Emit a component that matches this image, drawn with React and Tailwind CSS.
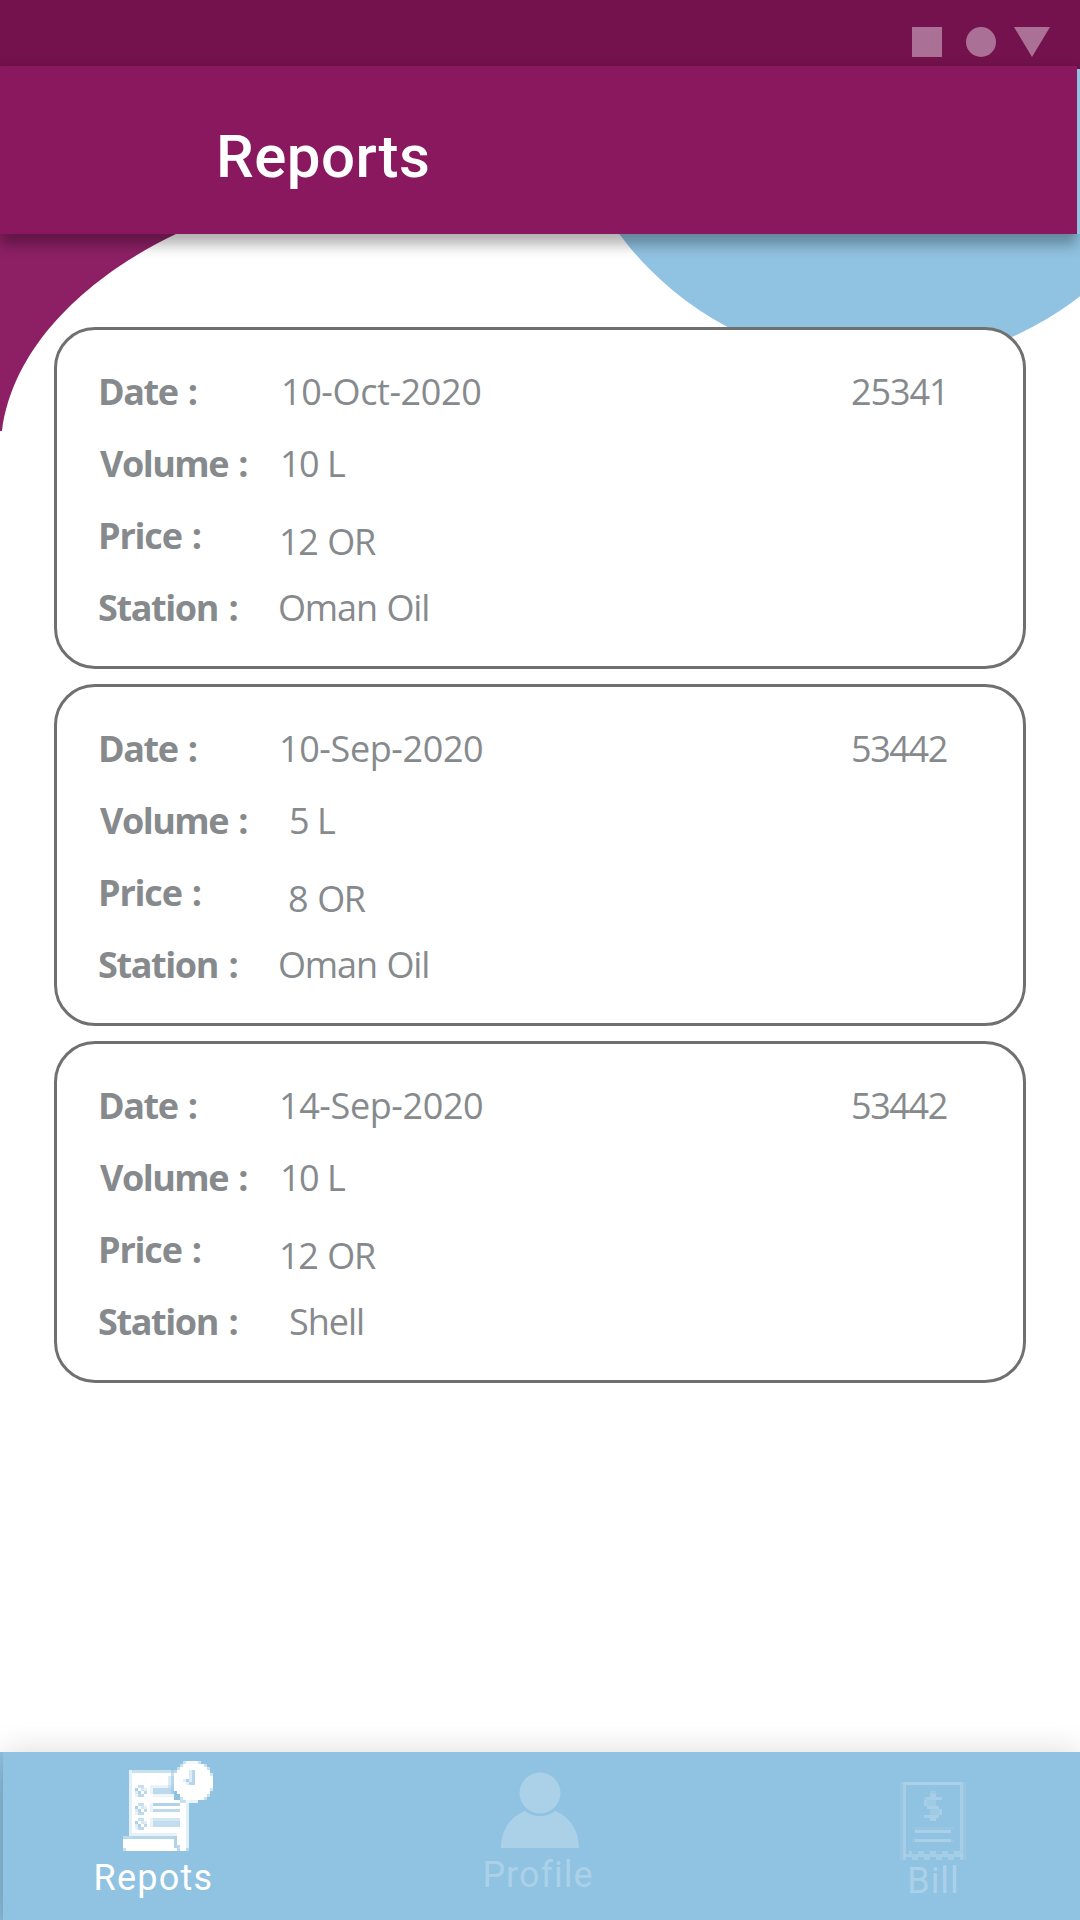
const reports = [
  {
    id: { text: "25341", className: "tracking-[-1.1px]" },
    rows: [
      { text: "10-Oct-2020", className: "ml-[2px] tracking-[-0.4px]" },
      { text: "10 L", className: "ml-px tracking-[-1.5px] [word-spacing:1px]" },
      { text: "12 OR", className: "pt-3 tracking-[-1.4px] [word-spacing:2px]" },
      { text: "Oman Oil", className: "-ml-px tracking-[-1.15px] [word-spacing:1.5px]" },
    ],
  },
  {
    id: { text: "53442", className: "tracking-[-1.4px]" },
    rows: [
      { text: "10-Sep-2020", className: "tracking-[-0.4px]" },
      { text: "5 L", className: "ml-[10px] tracking-[-1.5px] [word-spacing:1px]" },
      { text: "8 OR", className: "ml-[9px] pt-3 tracking-[-1.4px] [word-spacing:2px]" },
      { text: "Oman Oil", className: "-ml-px tracking-[-1.15px] [word-spacing:1.5px]" },
    ],
  },
  {
    id: { text: "53442", className: "tracking-[-1.4px]" },
    rows: [
      { text: "14-Sep-2020", className: "tracking-[-0.4px]" },
      { text: "10 L", className: "ml-px tracking-[-1.5px] [word-spacing:1px]" },
      { text: "12 OR", className: "pt-3 tracking-[-1.4px] [word-spacing:2px]" },
      { text: "Shell", className: "ml-[10px] tracking-[-1px]" },
    ],
  },
];

const labels = [
  { text: "Date :", className: "w-[181px] tracking-[-1.4px] [word-spacing:2px]" },
  { text: "Volume :", className: "w-[181px] pl-[2px] tracking-[-1.5px] [word-spacing:2.5px]" },
  { text: "Price :", className: "w-[181px] tracking-[-1.2px] [word-spacing:2px]" },
  { text: "Station :", className: "w-[181px] tracking-[-1.4px] [word-spacing:2.5px]" },
];

function StatusBar() {
  return (
    <div className="flex h-[69px] items-start justify-end bg-[#74124d] pt-[27px] pr-[30px]">
      <svg width="138" height="30" viewBox="0 0 138 30" fill="#ab7095">
        <rect width="30" height="30" />
        <circle cx="69" cy="15" r="15" />
        <path d="M102 0H138L120 30Z" />
      </svg>
    </div>
  );
}

function AppBar() {
  return (
    <header className="relative -mt-[3px] flex h-[168px]">
      <div className="flex flex-1 items-center bg-[#89185e] pt-[13px] pl-[216px] shadow-[0_12px_12px_rgba(0,0,0,0.26),0_0_12px_rgba(0,0,0,0.12)]">
        <h1 className="font-['Roboto',sans-serif] text-[60px] leading-[70px] font-medium tracking-[0.45px] text-white">
          Reports
        </h1>
      </div>
      <div className="relative mt-[3px] w-[3px] bg-[#8fc1e0]" />
    </header>
  );
}

function Backdrop() {
  return (
    <svg className="absolute top-0 left-0" width="1080" height="440" viewBox="0 0 1080 440">
      <path d="M0 200H176V234C110 265 15 332 2 431H0Z" fill="#8d2065" />
      <circle cx="880" cy="40" r="325" fill="#90c2e1" />
    </svg>
  );
}

function ReportCard({ report }) {
  return (
    <section className="h-[342px] rounded-[41px] border-[3px] border-[#707070] bg-white pt-[25px] pl-[41px]">
      {labels.map((label, i) => (
        <div key={label.text} className="flex h-[72px] items-center">
          <div className="shrink-0">
            <div className={"font-bold " + label.className}>{label.text}</div>
          </div>
          <div className="flex-1">
            <div className={report.rows[i].className}>{report.rows[i].text}</div>
          </div>
          {i === 0 && (
            <div className="w-[172px]">
              <span className={report.id.className}>{report.id.text}</span>
            </div>
          )}
        </div>
      ))}
    </section>
  );
}

// Clock face as horizontal runs: [x, y, width, opacity]
const clockRuns = [
  [20, 0, 6, 0.55],
  [21, 0, 4, 0.8],
  [19, 1, 9, 0.5],
  [20, 1, 7, 1],
  [18, 2, 11, 0.5],
  [19, 2, 9, 1],
  [17, 3, 12, 0.4],
  [18, 3, 11, 1],
  [29, 4, 1, 0.6],
];

function Tick({ y }) {
  return (
    <g fill="#8fc1e0">
      <rect x="5" y={y} width="2" height="1" opacity="0.5" />
      <rect x="4" y={y + 1} width="1" height="1" opacity="0.75" />
      <rect x="6" y={y + 1} width="1" height="1" opacity="0.4" />
      <rect x="7" y={y + 1} width="1" height="1" opacity="0.25" />
      <rect x="4" y={y + 2} width="1" height="1" opacity="0.3" />
      <rect x="5" y={y + 2} width="1" height="1" opacity="0.7" />
      <rect x="7" y={y + 2} width="1" height="1" opacity="0.6" />
      <rect x="5" y={y + 3} width="2" height="1" opacity="0.6" />
      <rect x="4" y={y + 3} width="1" height="1" opacity="0.2" />
    </g>
  );
}

function ReportsIcon() {
  return (
    <svg className="ml-[28px]" width="90" height="90" viewBox="0 0 30 30" shapeRendering="crispEdges">
      <g fill="#fff">
        <rect x="3" y="3" width="14" height="1" opacity="0.5" />
        <rect x="2" y="3" width="1" height="22" opacity="0.75" />
        <rect x="3" y="4" width="14" height="26" />
        <rect x="17" y="13" width="4" height="17" />
        <rect x="21" y="13" width="1" height="17" opacity="0.75" />
        <rect x="0" y="26" width="4" height="4" />
      </g>
      <g fill="#8fc1e0">
        <rect x="15" y="5" width="2" height="4" opacity="0.3" />
        <rect x="9" y="8" width="1" height="3" opacity="0.2" />
        <rect x="10" y="8" width="7" height="1" opacity="0.2" />
        <rect x="10" y="9" width="7" height="2" opacity="0.6" />
        <rect x="10" y="11" width="8" height="1" opacity="0.15" />
        <rect x="10" y="14" width="9" height="1" opacity="0.7" />
        <rect x="10" y="16" width="9" height="1" opacity="0.6" />
        <rect x="9" y="14" width="1" height="3" opacity="0.2" />
        <rect x="9" y="19" width="1" height="3" opacity="0.2" />
        <rect x="10" y="19" width="9" height="1" opacity="0.4" />
        <rect x="10" y="20" width="9" height="2" opacity="0.55" />
        <rect x="3" y="24" width="15" height="1" opacity="0.22" />
        <rect x="3" y="25" width="14" height="1" opacity="0.65" />
        <rect x="17" y="25" width="1" height="4" opacity="0.7" />
        <rect x="18" y="28" width="1" height="2" opacity="0.6" />
        <rect x="0" y="29" width="1" height="1" opacity="0.5" />
        <rect x="21" y="29" width="1" height="1" opacity="0.5" />
      </g>
      <rect x="0" y="25" width="3" height="1" fill="#fff" opacity="0.4" />
      <Tick y={8} />
      <Tick y={14} />
      <Tick y={19} />
      <path d="M17 3H16V11H17V12H18V13H19V14H22V13H17Z" fill="#8fc1e0" opacity="0.5" />
      <g fill="#fff">
        {clockRuns.map(([x, y, w, o], i) => (
          <rect key={i} x={x} y={y} width={w} height="1" opacity={o} />
        ))}
        <rect x="17" y="4" width="12" height="6" />
        <rect x="29" y="5" width="1" height="4" />
        <rect x="29" y="9" width="1" height="1" opacity="0.6" />
        <rect x="18" y="10" width="11" height="1" />
        <rect x="19" y="11" width="9" height="1" />
        <rect x="28" y="11" width="1" height="1" opacity="0.5" />
        <rect x="20" y="12" width="7" height="1" />
        <rect x="19" y="12" width="1" height="1" opacity="0.5" />
        <rect x="27" y="12" width="1" height="1" opacity="0.5" />
        <rect x="21" y="13" width="4" height="1" opacity="0.8" />
      </g>
      <g fill="#8fc1e0">
        <rect x="23" y="3" width="1" height="5" opacity="0.65" />
        <rect x="22" y="3" width="1" height="4" opacity="0.3" />
        <rect x="21" y="6" width="1" height="1" opacity="0.7" />
        <rect x="20" y="6" width="1" height="1" opacity="0.25" />
        <rect x="22" y="7" width="1" height="1" opacity="0.65" />
        <rect x="21" y="7" width="1" height="1" opacity="0.25" />
      </g>
    </svg>
  );
}

function ProfileIcon() {
  return (
    <svg className="ml-[3px]" width="78" height="76" viewBox="0 0 78 76">
      <path d="M0 76C0 58 10 44 24 39A24.5 24.5 0 0 0 54 39C68 44 78 58 78 76Z" fill="#abd1e9" />
      <circle cx="39" cy="21" r="20.5" fill="#abd1e9" />
    </svg>
  );
}

function BillIcon() {
  return (
    <svg width="66" height="78" viewBox="0 0 22 26" fill="#abd1e9" shapeRendering="crispEdges">
      <rect x="1" y="0" width="20" height="1" />
      <rect x="1" y="1" width="1" height="24" opacity="0.8" />
      <rect x="0" y="0" width="1" height="26" opacity="0.3" />
      <rect x="20" y="1" width="1" height="24" opacity="0.8" />
      <rect x="21" y="0" width="1" height="26" opacity="0.3" />
      <path d="M10 4H12V5H14V6H9V5H10ZM8 6H9V8H8ZM9 8H13V9H9ZM13 9H14V11H13ZM8 11H13V12H12V13H10V12H8Z" opacity="0.85" />
      <path d="M10 3H12V4H10ZM8 5H9V6H8ZM9 6H12V8H9ZM10 9H13V11H10Z" opacity="0.5" />
      <rect x="5" y="16" width="12" height="1" />
      <rect x="4" y="15" width="14" height="1" opacity="0.25" />
      <rect x="5" y="19" width="12" height="1" />
      <rect x="4" y="19" width="14" height="1" opacity="0.25" />
      <path d="M1 24H3V23H4V24H6V23H8V24H10V23H12V24H14V23H16V24H18V23H20V24H21V26H20V25H18V26H16V25H14V26H12V25H10V26H8V25H6V26H4V25H2V26H1Z" opacity="0.75" />
    </svg>
  );
}

function BottomNav() {
  return (
    <div className="h-[168px] bg-[#8fc1e0] pl-[3px]">
      <nav className="flex h-full bg-[#90c2e1] font-['Roboto',sans-serif] text-[36px] leading-[42px] text-[#abd1e9] shadow-[0_24px_24px_rgba(0,0,0,0.12),0_0_30px_rgba(0,0,0,0.15)]">
        <div className="flex w-[301px] flex-col items-center pt-[9px] text-white">
          <ReportsIcon />
          <span className="mt-[6px] tracking-[1.25px]">Repots</span>
        </div>
        <div className="flex w-[468px] flex-col items-center pt-[20px]">
          <ProfileIcon />
          <span className="mt-[6px] tracking-[1px]">Profile</span>
        </div>
        <div className="flex w-[308px] flex-col items-center pt-[30px] pl-[14px]">
          <BillIcon />
          <span className="ml-px tracking-[0.9px]">Bill</span>
        </div>
      </nav>
    </div>
  );
}

export default function App() {
  return (
    <div className="relative flex h-[1920px] w-[1080px] flex-col overflow-hidden bg-white">
      <Backdrop />
      <div className="relative flex flex-1 flex-col">
        <StatusBar />
        <AppBar />
        <main className="mx-[54px] mt-[93px] flex flex-1 flex-col gap-[15px] font-['Open_Sans','Noto_Sans',sans-serif] text-[36px] leading-[49px] whitespace-nowrap text-[#868a8d]">
          {reports.map((report, i) => (
            <ReportCard key={i} report={report} />
          ))}
        </main>
        <BottomNav />
      </div>
    </div>
  );
}
